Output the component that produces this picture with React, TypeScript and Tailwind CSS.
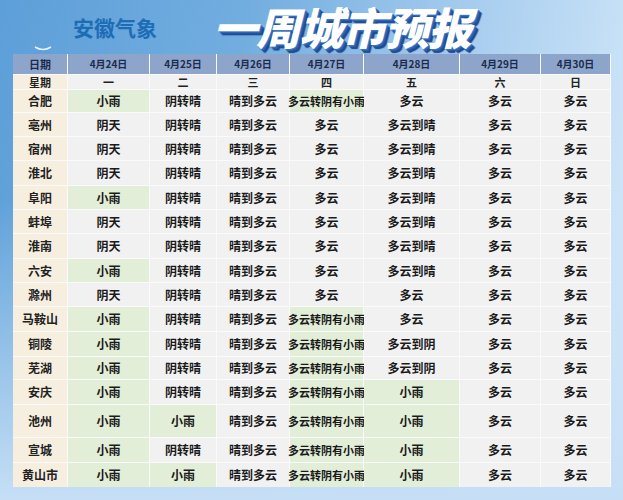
const days = ["4月24日", "4月25日", "4月26日", "4月27日", "4月28日", "4月29日", "4月30日"];
const weekdays = ["一", "二", "三", "四", "五", "六", "日"];

type Row = { city: string; h: string; cells: string[] };

const rows: Row[] = [
  { city: "合肥", h: "h-[22px]", cells: ["小雨", "阴转晴", "晴到多云", "多云转阴有小雨", "多云", "多云", "多云"] },
  { city: "亳州", h: "h-[23px]", cells: ["阴天", "阴转晴", "晴到多云", "多云", "多云到晴", "多云", "多云"] },
  { city: "宿州", h: "h-[23px]", cells: ["阴天", "阴转晴", "晴到多云", "多云", "多云到晴", "多云", "多云"] },
  { city: "淮北", h: "h-[24px]", cells: ["阴天", "阴转晴", "晴到多云", "多云", "多云到晴", "多云", "多云"] },
  { city: "阜阳", h: "h-[23px]", cells: ["小雨", "阴转晴", "晴到多云", "多云", "多云到晴", "多云", "多云"] },
  { city: "蚌埠", h: "h-[23px]", cells: ["阴天", "阴转晴", "晴到多云", "多云", "多云到晴", "多云", "多云"] },
  { city: "淮南", h: "h-[24px]", cells: ["阴天", "阴转晴", "晴到多云", "多云", "多云到晴", "多云", "多云"] },
  { city: "六安", h: "h-[23px]", cells: ["小雨", "阴转晴", "晴到多云", "多云", "多云到晴", "多云", "多云"] },
  { city: "滁州", h: "h-[23px]", cells: ["阴天", "阴转晴", "晴到多云", "多云", "多云", "多云", "多云"] },
  { city: "马鞍山", h: "h-[24px]", cells: ["小雨", "阴转晴", "晴到多云", "多云转阴有小雨", "多云", "多云", "多云"] },
  { city: "铜陵", h: "h-[24px]", cells: ["小雨", "阴转晴", "晴到多云", "多云转阴有小雨", "多云到阴", "多云", "多云"] },
  { city: "芜湖", h: "h-[22px]", cells: ["小雨", "阴转晴", "晴到多云", "多云转阴有小雨", "多云到阴", "多云", "多云"] },
  { city: "安庆", h: "h-[24px]", cells: ["小雨", "阴转晴", "晴到多云", "多云转阴有小雨", "小雨", "多云", "多云"] },
  { city: "池州", h: "h-[32px]", cells: ["小雨", "小雨", "晴到多云", "多云转阴有小雨", "小雨", "多云", "多云"] },
  { city: "宣城", h: "h-[24px]", cells: ["小雨", "阴转晴", "晴到多云", "多云转阴有小雨", "小雨", "多云", "多云"] },
  { city: "黄山市", h: "h-[24px]", cells: ["小雨", "小雨", "晴到多云", "多云转阴有小雨", "小雨", "多云", "多云"] },
];

const isWet = (t: string) => t.includes("小雨");

const grid = "grid grid-cols-[54px_81px_66px_72px_73px_95px_80px_69px] gap-[1px]";

export default function App() {
  return (
    <div className="relative h-[500px] w-[623px] overflow-hidden bg-[linear-gradient(100deg,#5d9fd9_0%,#72addf_35%,#acd0f0_70%,#d8ebfa_100%)] font-['Noto_Sans_CJK_SC',sans-serif]">
      <div className="absolute inset-x-0 bottom-0 h-[300px] bg-[linear-gradient(180deg,rgba(190,220,245,0)_0%,#c6dff6_100%)]" />
      <div className="relative flex h-[54px] items-start">
        <div className="ml-[73px] mt-[17px] text-[21px] font-bold leading-none text-[#1d6db6]">
          安徽气象
        </div>
        <div className="ml-[56px] mt-[4px] pr-2 text-[44px] font-black italic leading-none tracking-[-1px] text-white [text-shadow:1px_1px_0_#3b76c4,2px_2px_0_#2a5fae,3px_3px_0_#1f4f9c,4px_4px_1px_#1a4690]">
          一周城市预报
        </div>
        <svg className="absolute left-[34px] top-[46px]" width="18" height="6" viewBox="0 0 18 6">
          <path d="M1 1 Q9 6 17 1" stroke="#ffffff" strokeWidth="1.6" fill="none" opacity="0.85" />
        </svg>
      </div>
      <div className={`relative ml-[13px] w-[598px] bg-[#fafafa] leading-none whitespace-nowrap ${grid}`}>
        <div className="flex h-[20px] items-center justify-center bg-[#8ea5cb] text-[11px] font-bold text-[#1c2c4e]">日期</div>
        {days.map((d) => (
          <div key={d} className="flex h-[20px] items-center justify-center bg-[#8ea5cb] text-[10px] font-bold text-[#1c2c4e]">
            {d}
          </div>
        ))}
        <div className="flex h-[14px] items-center justify-center bg-[#f6efe0] text-[11px] font-bold text-[#222]">星期</div>
        {weekdays.map((w) => (
          <div key={w} className="flex h-[14px] items-center justify-center bg-[#f1f1f1] text-[11px] font-bold text-[#222]">
            {w}
          </div>
        ))}
        {rows.map((r) => (
          <>
            <div key={r.city} className={`flex ${r.h} items-center justify-center bg-[#f6efe0] text-[12px] font-bold text-[#222]`}>
              {r.city}
            </div>
            {r.cells.map((c, i) => (
              <div
                key={r.city + i}
                className={`flex ${r.h} items-center justify-center ${c.length > 5 ? "text-[11px]" : "text-[12px]"} font-semibold text-[#1a1a1a] ${isWet(c) ? "bg-[#e2eed8]" : "bg-[#f1f1f1]"}`}
              >
                {c}
              </div>
            ))}
          </>
        ))}
      </div>
    </div>
  );
}
